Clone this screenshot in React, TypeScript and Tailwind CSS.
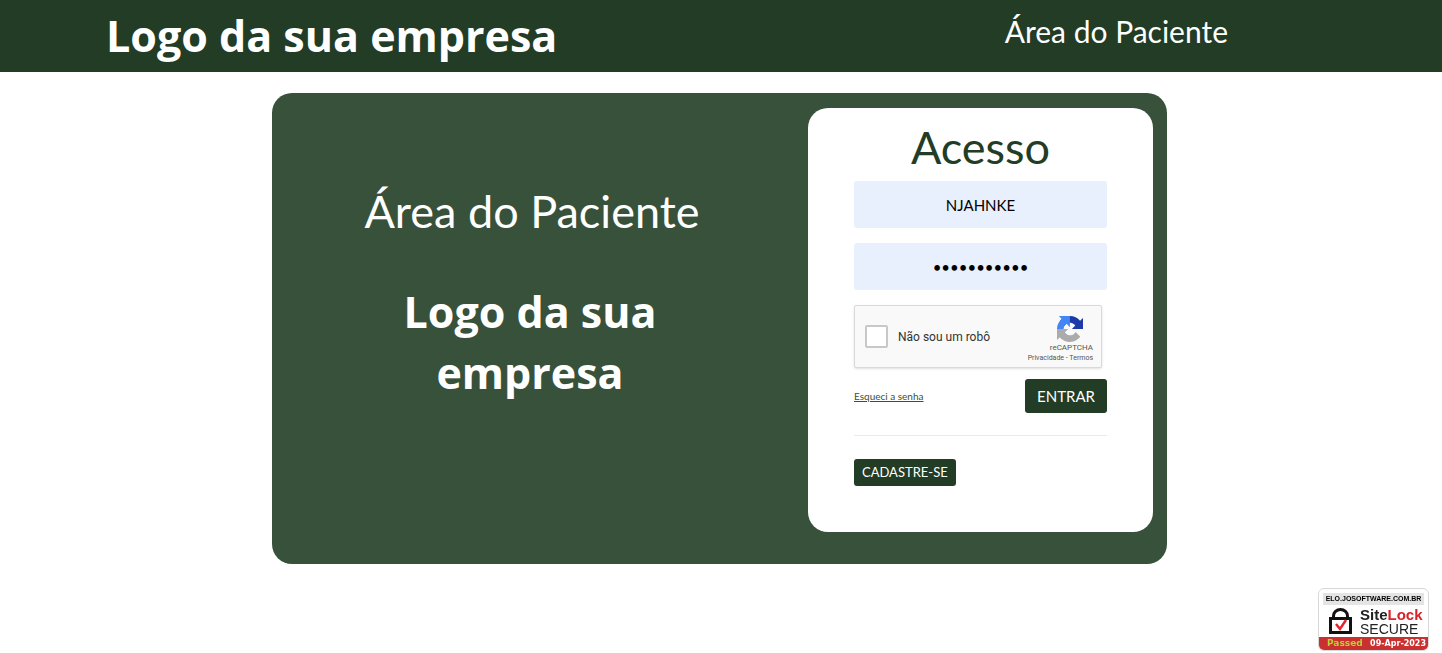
import { useState } from 'react'

const RecaptchaLogo = () => (
  <svg viewBox="0 0 64 64" className="size-[26px]" aria-hidden="true">
    <path
      d="M64 31.955l-.033-1.37V4.687l-7.16 7.16C50.948 4.674 42.033.093 32.05.093c-10.4 0-19.622 4.96-25.458 12.64l11.736 11.86a15.55 15.55 0 0 1 4.754-5.334c2.05-1.6 4.952-2.906 8.968-2.906.485 0 .86.057 1.135.163 4.976.393 9.288 3.14 11.828 7.124l-8.307 8.307L64 31.953"
      fill="#1c3aa9"
    />
    <path
      d="M31.862.094l-1.37.033H4.594l7.16 7.16C4.58 13.147 0 22.06 0 32.046c0 10.4 4.96 19.622 12.64 25.458L24.5 45.768a15.55 15.55 0 0 1-5.334-4.754c-1.6-2.05-2.906-4.952-2.906-8.968 0-.485.057-.86.163-1.135.393-4.976 3.14-9.288 7.124-11.828l8.307 8.307L31.86.095"
      fill="#4285f4"
    />
    <path
      d="M.001 32.045l.033 1.37v25.898l7.16-7.16c5.86 7.173 14.774 11.754 24.76 11.754 10.4 0 19.622-4.96 25.458-12.64l-11.736-11.86a15.55 15.55 0 0 1-4.754 5.334c-2.05 1.6-4.952 2.906-8.968 2.906-.485 0-.86-.057-1.135-.163-4.976-.393-9.288-3.14-11.828-7.124l8.307-8.307c-10.522.04-22.4.066-27.295-.005"
      fill="#ababab"
    />
  </svg>
)

const Header = () => (
  <header className="flex h-[72px] justify-between bg-[#223c25] pl-[106px] pr-[214px] text-white">
    <span className="font-['Open_Sans',sans-serif] text-[43px] font-bold leading-[72px]">
      Logo da sua empresa
    </span>
    <span className="text-[30px] leading-[62px]">Área do Paciente</span>
  </header>
)

const Recaptcha = () => (
  <div className="mt-[15px] flex h-[63px] w-[248px] items-center rounded-xs border border-[#d9d9d9] bg-[#f9f9f9] pl-2.5 pr-2 font-[Roboto,sans-serif] shadow-sm">
    <input
      id="robot"
      type="checkbox"
      className="size-[23px] appearance-none rounded-xs border-2 border-[#c8c8c8] bg-white checked:bg-[#4285f4]"
    />
    <label htmlFor="robot" className="ml-2.5 text-xs text-[#333]">
      Não sou um robô
    </label>
    <div className="ml-auto flex flex-col items-end pt-1 text-[#555]">
      <div className="mr-2.5">
        <RecaptchaLogo />
      </div>
      <span className="text-[8px] leading-[12px]">reCAPTCHA</span>
      <span className="text-[7px] leading-[8px]">
        <a href="#privacidade">Privacidade</a> - <a href="#termos">Termos</a>
      </span>
    </div>
  </div>
)

const LoginForm = () => {
  const [user, setUser] = useState('NJAHNKE')
  const [password, setPassword] = useState('senha123456')

  return (
    <form
      onSubmit={(e) => e.preventDefault()}
      className="w-[345px] rounded-[20px] bg-white px-[46px] pb-[46px] pt-[15px]"
    >
      <h2 className="text-center text-[45px] leading-[48px] text-[#223c25]">Acesso</h2>
      <input
        type="text"
        aria-label="Usuário"
        value={user}
        onChange={(e) => setUser(e.target.value)}
        className="mt-2.5 block h-[47px] w-full rounded-[3px] bg-[#e8f0fe] text-center text-[15px] text-black"
      />
      <input
        type="password"
        aria-label="Senha"
        value={password}
        onChange={(e) => setPassword(e.target.value)}
        className="mt-[15px] block h-[47px] w-full rounded-[3px] bg-[#e8f0fe] text-center text-[15px] text-black"
      />
      <Recaptcha />
      <div className="mt-[11px] flex items-center justify-between">
        <a href="#senha" className="text-[10px] text-[#38513a] underline">Esqueci a senha</a>
        <button type="submit" className="h-[34px] rounded-[3px] bg-[#223c25] px-3 text-[15px] text-white">
          ENTRAR
        </button>
      </div>
      <hr className="mb-[23px] mt-[22px] border-t border-[#e9e9e9]" />
      <button type="button" className="block h-[27px] rounded-[3px] bg-[#223c25] px-2 text-[13px] text-white">
        CADASTRE-SE
      </button>
    </form>
  )
}

const SiteLockBadge = () => (
  <div className="fixed bottom-0.5 right-[13px] w-[111px] overflow-hidden rounded-md border border-[#d8d8d8] bg-white font-['Liberation_Sans',sans-serif]">
    <div className="mx-1 mt-1 bg-[#e4e4e4] text-center text-[7px] font-bold leading-[12px] text-black">
      ELO.JOSOFTWARE.COM.BR
    </div>
    <div className="flex h-[32px] items-center gap-2 pl-2.5">
      <svg viewBox="0 0 23 26" className="h-[26px] w-[23px]" fill="none" aria-hidden="true">
        <path d="M4.500 11V8a7 6.500 0 0 1 14 0v3" stroke="#111" strokeWidth="3" />
        <rect x="1.500" y="10.500" width="20" height="14" stroke="#111" strokeWidth="3" />
        <path d="m7 16 4 5 6-9" stroke="#e3242b" strokeWidth="2.500" />
      </svg>
      <div className="flex flex-col text-[#222]">
        <span className="text-[15px] font-bold leading-[15px]">
          Site<span className="text-[#d8232a]">Lock</span>
        </span>
        <span className="text-sm leading-[14px]">SECURE</span>
      </div>
    </div>
    <div className="flex justify-between bg-[#c9302f] pl-2 pr-0.5 font-['DejaVu_Sans',sans-serif] font-bold leading-[13px] text-white">
      <span className="text-[9px] text-[#b5d334]">Passed</span>
      <span className="text-[8px]">09-Apr-2023</span>
    </div>
  </div>
)

const App = () => (
  <div className="min-h-screen bg-white font-[Lato,sans-serif]">
    <Header />
    <div className="pr-[3px] pt-[21px]">
      <main className="mx-auto flex w-full max-w-[895px] rounded-[20px] bg-[#38513a] pb-8 pr-3.5 pt-[15px]">
        <section className="flex flex-1 flex-col items-center pr-4 pt-[71px] text-center text-white">
          <h1 className="text-[45px] leading-[64px]">Área do Paciente</h1>
          <p className="mt-[38px] w-[320px] pr-1 font-['Open_Sans',sans-serif] text-[43px] font-bold leading-[61px]">
            Logo da sua empresa
          </p>
        </section>
        <LoginForm />
      </main>
    </div>
    <SiteLockBadge />
  </div>
)

export default App
